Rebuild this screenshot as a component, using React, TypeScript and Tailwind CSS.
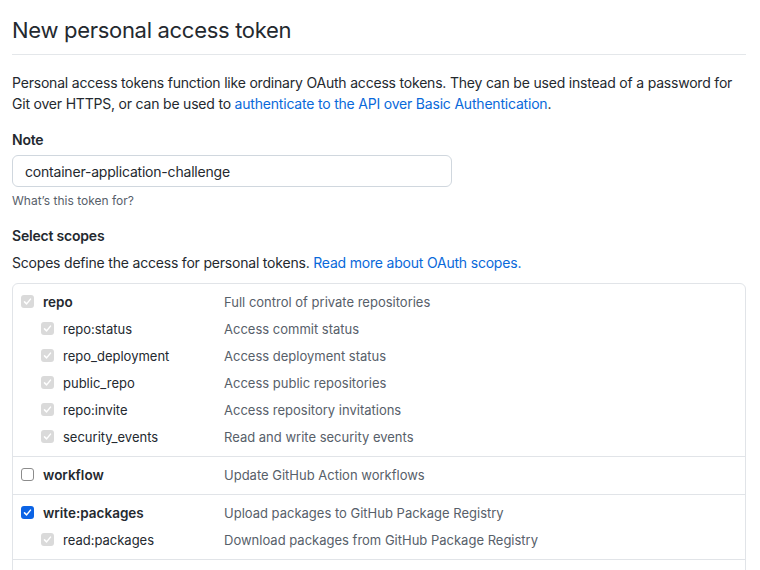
import React, { useState } from 'react';

type Scope = {
    name: string;
    description: string;
    children?: { name: string; description: string }[];
};

const scopes: Scope[] = [
    {
        name: 'repo',
        description: 'Full control of private repositories',
        children: [
            { name: 'repo:status', description: 'Access commit status' },
            { name: 'repo_deployment', description: 'Access deployment status' },
            { name: 'public_repo', description: 'Access public repositories' },
            { name: 'repo:invite', description: 'Access repository invitations' },
            { name: 'security_events', description: 'Read and write security events' },
        ],
    },
    { name: 'workflow', description: 'Update GitHub Action workflows' },
    {
        name: 'write:packages',
        description: 'Upload packages to GitHub Package Registry',
        children: [{ name: 'read:packages', description: 'Download packages from GitHub Package Registry' }],
    },
    { name: 'delete:packages', description: 'Delete packages from GitHub Package Registry' },
];

const CheckMark = () => (
    <svg viewBox="0 0 12 12" className="w-[9px] h-[9px]" fill="none">
        <path d="M2 6.5 L4.8 9.2 L10 2.8" stroke="white" strokeWidth="2" strokeLinecap="round" strokeLinejoin="round" />
    </svg>
);

const Box = ({ state }: { state: 'on' | 'off' | 'locked' }) => {
    if (state === 'on') {
        return (
            <span className="w-[13px] h-[13px] rounded-[3px] bg-[#0b63e5] flex items-center justify-center shrink-0 -mt-[2px]">
                <CheckMark />
            </span>
        );
    }
    if (state === 'locked') {
        return (
            <span className="w-[13px] h-[13px] rounded-[3px] bg-[#dadada] flex items-center justify-center shrink-0 -mt-[2px]">
                <CheckMark />
            </span>
        );
    }
    return <span className="w-[13px] h-[13px] rounded-[3px] bg-white border border-[#8c8c8c] shrink-0 -mt-[2px]" />;
};

const App = () => {
    const [note, setNote] = useState('container-application-challenge');
    const [checked, setChecked] = useState<Record<string, boolean>>({
        repo: true,
        workflow: false,
        'write:packages': true,
        'delete:packages': false,
    });

    return (
        <div
            className="bg-white min-h-screen pl-3 pr-[14px] pt-[15px] text-[#24292f] text-[14px] leading-[21px] tracking-[-0.2px]"
            style={{ fontFamily: 'Inter, "Liberation Sans", sans-serif' }}
        >
            <h1 className="text-[22px] leading-[30px] font-normal tracking-[-0.3px] pb-[9px] border-b border-[#e4e7ea]">New personal access token</h1>

            <p className="mt-[17px]">
                Personal access tokens function like ordinary OAuth access tokens. They can be used instead of a password for
                Git over HTTPS, or can be used to <a className="text-[#0969da]">authenticate to the API over Basic Authentication</a>.
            </p>

            <div className="mt-[15px]">
                <label className="font-semibold block">Note</label>
                <input
                    type="text"
                    value={note}
                    onChange={e => setNote(e.target.value)}
                    className="mt-[5px] w-[440px] h-8 border border-[#d0d7de] rounded-md px-3 text-[14px] tracking-[-0.2px] text-[#24292f] outline-none"
                />
                <p className="mt-[5px] text-[12px] leading-[18px] tracking-normal text-[#57606a]">What’s this token for?</p>
            </div>

            <div className="mt-[15px]">
                <h2 className="font-semibold">Select scopes</h2>
                <p className="mt-[6px]">
                    Scopes define the access for personal tokens. <a className="text-[#0969da]">Read more about OAuth scopes.</a>
                </p>

                <div className="mt-[10px] border border-[#e1e4e8] rounded-md tracking-normal">
                    {scopes.map((scope, i) => {
                        const on = checked[scope.name];
                        return (
                            <div key={scope.name} className={`pt-[5px] pb-[5px] ${i > 0 ? 'border-t border-[#e1e4e8]' : ''}`}>
                                <div
                                    className="flex items-center h-[27px] cursor-pointer"
                                    onClick={() => setChecked({ ...checked, [scope.name]: !on })}
                                >
                                    <div className="w-[211px] flex items-center pl-2 gap-[9px] shrink-0">
                                        <Box state={scope.name === 'repo' ? 'locked' : on ? 'on' : 'off'} />
                                        <span className="font-semibold text-[13.5px]">{scope.name}</span>
                                    </div>
                                    <span className="text-[13px] text-[#57606a]">{scope.description}</span>
                                </div>
                                {scope.children?.map(child => (
                                    <div key={child.name} className="flex items-center h-[27px]">
                                        <div className="w-[211px] flex items-center pl-7 gap-[9px] shrink-0">
                                            <Box state="locked" />
                                            <span className="text-[13px]">{child.name}</span>
                                        </div>
                                        <span className="text-[13px] text-[#57606a]">{child.description}</span>
                                    </div>
                                ))}
                            </div>
                        );
                    })}
                </div>
            </div>
        </div>
    );
};

export default App;
